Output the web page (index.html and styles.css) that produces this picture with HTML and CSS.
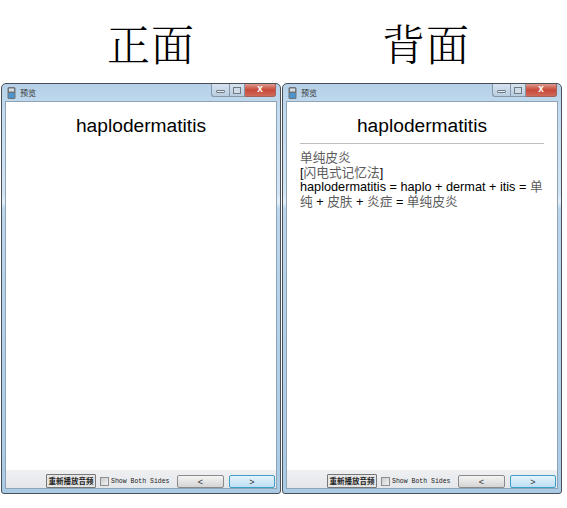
FILE: index.html
```html
<!DOCTYPE html>
<html lang="zh">
<head>
<meta charset="utf-8">
<title>预览</title>
<link rel="stylesheet" href="styles.css">
</head>
<body>
<main class="page">
  <section class="pane">
    <h1 class="heading heading-front">正面</h1>
    <div class="window">
      <div class="titlebar">
        <svg class="app-icon" width="9" height="12" viewBox="0 0 9 12"><rect x="0.5" y="0" width="8" height="12" rx="1.5" fill="#6d7378"/><rect x="2" y="1.5" width="5" height="3" fill="#d8dde0"/><rect x="1.5" y="6" width="6" height="5" fill="#4d94cc"/></svg>
        <span class="title">预览</span>
        <div class="controls">
          <span class="ctl ctl-min"><i class="glyph-min"></i></span>
          <span class="ctl ctl-max"><i class="glyph-max"></i></span>
          <span class="ctl ctl-close">x</span>
        </div>
      </div>
      <div class="content">
        <div class="card-q">haplodermatitis</div>
      </div>
      <div class="footer">
        <button class="replay">重新播放音频</button>
        <label class="both"><span class="check"></span><span class="both-text">Show Both Sides</span></label>
        <button class="nav">&lt;</button>
        <button class="nav nav-next">&gt;</button>
      </div>
    </div>
  </section>
  <section class="pane">
    <h1 class="heading heading-back">背面</h1>
    <div class="window">
      <div class="titlebar">
        <svg class="app-icon" width="9" height="12" viewBox="0 0 9 12"><rect x="0.5" y="0" width="8" height="12" rx="1.5" fill="#6d7378"/><rect x="2" y="1.5" width="5" height="3" fill="#d8dde0"/><rect x="1.5" y="6" width="6" height="5" fill="#4d94cc"/></svg>
        <span class="title">预览</span>
        <div class="controls">
          <span class="ctl ctl-min"><i class="glyph-min"></i></span>
          <span class="ctl ctl-max"><i class="glyph-max"></i></span>
          <span class="ctl ctl-close">x</span>
        </div>
      </div>
      <div class="content">
        <div class="card-q">haplodermatitis</div>
        <hr class="rule">
        <div class="answer">
          <span class="cjk">单纯皮炎</span><br>
          [<span class="cjk">闪电式记忆法</span>]<br>
          haplodermatitis = haplo + dermat + itis = <span class="cjk">单纯</span> + <span class="cjk">皮肤</span> + <span class="cjk">炎症</span> = <span class="cjk">单纯皮炎</span>
        </div>
      </div>
      <div class="footer">
        <button class="replay">重新播放音频</button>
        <label class="both"><span class="check"></span><span class="both-text">Show Both Sides</span></label>
        <button class="nav">&lt;</button>
        <button class="nav nav-next">&gt;</button>
      </div>
    </div>
  </section>
</main>
</body>
</html>
```

FILE: styles.css
```css
* { box-sizing: border-box; }
html, body { margin: 0; background: #fff; }
body { width: 567px; height: 508px; overflow: hidden; font-family: "Liberation Sans", "Noto Sans CJK SC", sans-serif; }
.page { display: flex; gap: 1px; padding: 0 0 0 1px; }
.pane { width: 280px; }
.heading {
  margin: 0;
  height: 83px;
  padding-top: 18px;
  font-family: "Noto Serif CJK SC", "Liberation Serif", "Noto Sans CJK SC", serif;
  font-weight: 300;
  font-size: 43px;
  line-height: 50px;
  letter-spacing: 1px;
  color: #000;
}
.heading-front { padding-left: 106px; }
.heading-back { padding-left: 100px; }
.window {
  width: 280px;
  height: 411px;
  border: 1px solid #4a5058;
  border-radius: 5px 5px 3px 3px;
  background: linear-gradient(180deg, #b5d0e8 0, #c4dcf0 28px, #d3e5f4 110px, #e6f0f8 118px, #bcd6ec 125px, #a9cbe6 100%);
  padding: 0 3px 4px;
  display: flex;
  flex-direction: column;
}
.titlebar { height: 17px; display: flex; align-items: center; padding-left: 2px; flex: none; }
.app-icon { flex: none; }
.title { margin-left: 4px; font-size: 8px; color: #333; }
.controls { margin-left: auto; margin-right: 1px; align-self: flex-start; display: flex; height: 13px; }
.ctl { display: flex; align-items: center; justify-content: center; height: 13px; border: 1px solid #8496a8; border-top: none; background: linear-gradient(180deg, #d6e3ef, #b9cde0); }
.ctl-min { width: 18px; border-radius: 0 0 0 3px; border-right: none; }
.ctl-max { width: 16px; }
.ctl-close { width: 31px; border: 1px solid #a0645a; border-top: none; border-left: none; border-radius: 0 0 3px 0; background: linear-gradient(180deg, #dd9a8e, #c9493a 50%, #cf6a5a); color: #fff; font: bold 10px/10px "Liberation Sans", sans-serif; padding-bottom: 2px; }
.glyph-min { width: 9px; height: 3px; margin-top: 3px; background: #e9eef3; border: 1px solid #6f7a85; border-radius: 1px; }
.glyph-max { width: 8px; height: 7px; background: #cfdce8; border: 1px solid #6f7a85; }
.content { flex: 1; background: #fff; border: 1px solid #8fa3b6; border-bottom: none; padding: 0 13px; min-height: 0; }
.card-q { margin-top: 12px; font-size: 19.2px; line-height: 23px; text-align: center; color: #000; }
.rule { margin: 6px 0 7px; border: none; border-top: 1px solid #bdbdbd; }
.answer { font-size: 12.7px; line-height: 14.7px; color: #000; }
.cjk { color: #5c5c5c; }
.footer { flex: none; height: 19px; background: linear-gradient(180deg, #eef0f2, #e4e7ea); border: 1px solid #8fa3b6; border-top: none; display: flex; align-items: flex-end; padding: 0 0 0 40px; }
.replay { width: 50px; height: 14px; padding: 0; border: 1px solid #777; border-radius: 1px; background: #e6e6e6; font: 700 7.5px/12px "Noto Sans CJK SC", sans-serif; color: #222; white-space: nowrap; }
.both { display: flex; align-items: center; height: 14px; margin-left: 4px; font: 6.5px/12px "Liberation Mono", monospace; color: #222; width: 77px; white-space: nowrap; }
.both-text { padding-top: 2px; }
.check { width: 9px; height: 9px; margin-right: 2px; flex: none; border: 1px solid #8e8e8e; background: linear-gradient(135deg, #ccc, #f1f1f1); }
.nav { width: 47px; height: 13px; margin-right: 5px; padding: 0; border: 1px solid #8a8a8a; border-radius: 2px; background: linear-gradient(180deg, #f4f4f4, #d4d4d4); font: 9px/10px "Liberation Sans", sans-serif; color: #333; }
.nav-next { width: 46px; margin-right: 0; border-color: #3c9ec9; background: linear-gradient(180deg, #e6f3fb, #bcdff3); }
```
